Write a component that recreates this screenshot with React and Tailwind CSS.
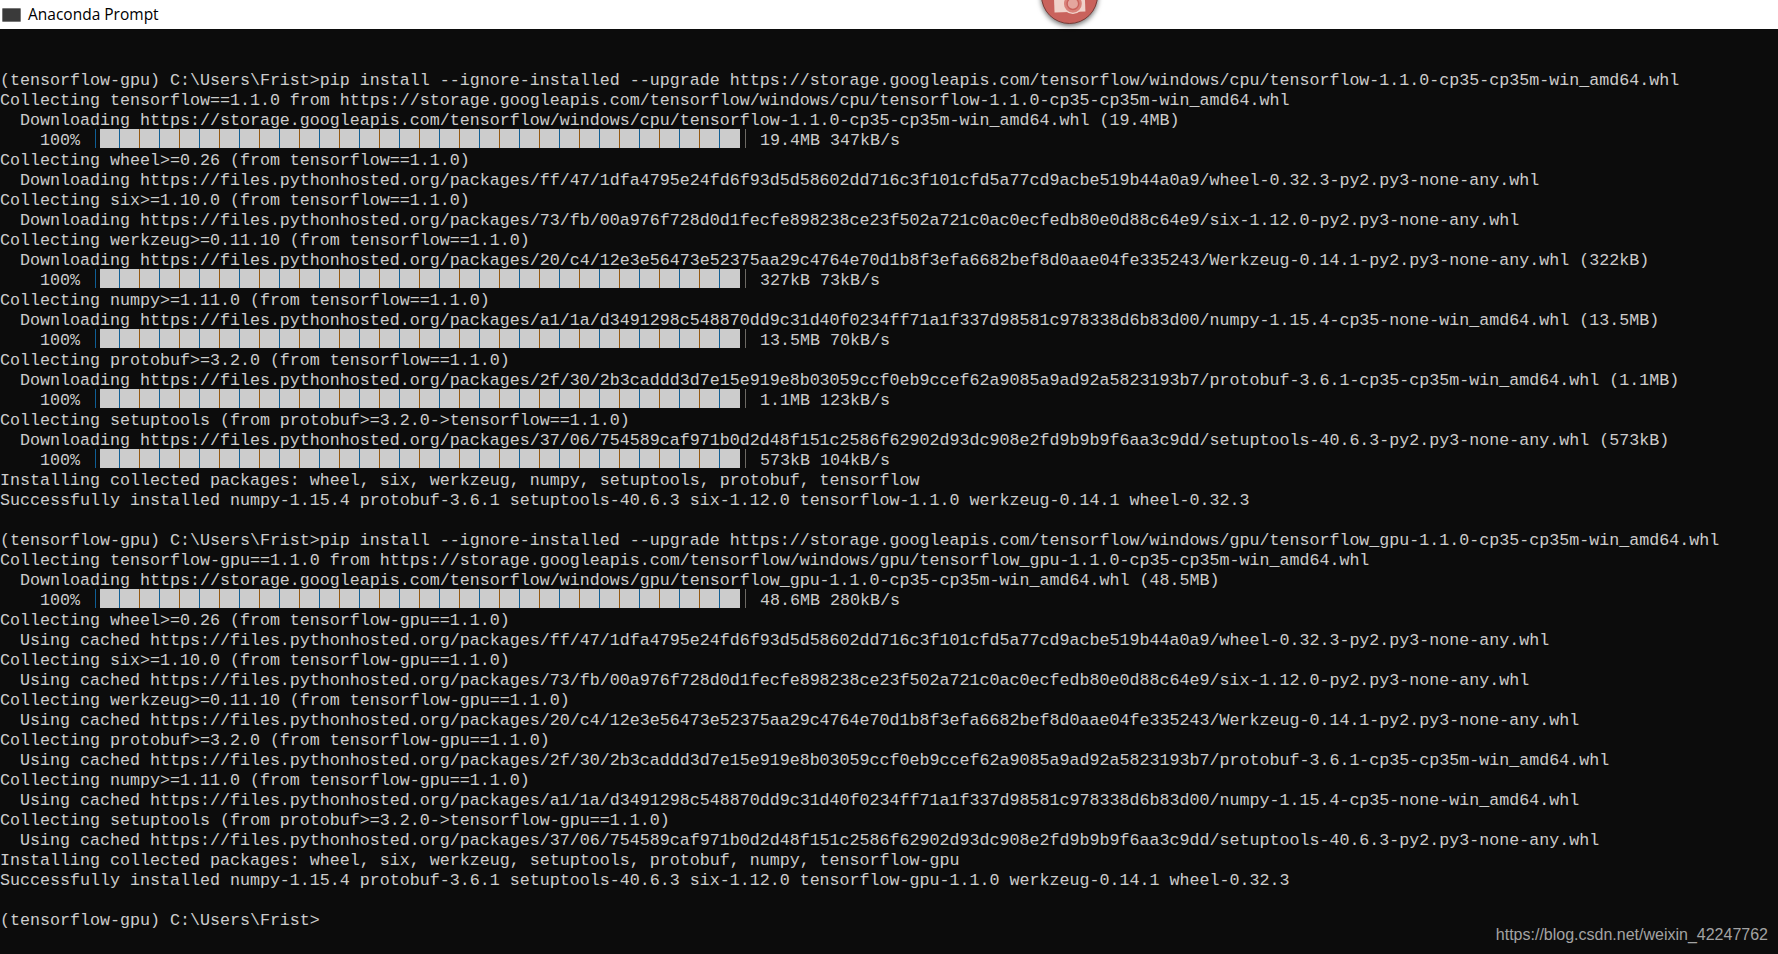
import React from 'react';

const cached = 'https://files.pythonhosted.org/packages';

const LINES = [
  '(tensorflow-gpu) C:\\Users\\Frist>pip install --ignore-installed --upgrade https://storage.googleapis.com/tensorflow/windows/cpu/tensorflow-1.1.0-cp35-cp35m-win_amd64.whl',
  'Collecting tensorflow==1.1.0 from https://storage.googleapis.com/tensorflow/windows/cpu/tensorflow-1.1.0-cp35-cp35m-win_amd64.whl',
  '  Downloading https://storage.googleapis.com/tensorflow/windows/cpu/tensorflow-1.1.0-cp35-cp35m-win_amd64.whl (19.4MB)',
  { bar: ' 19.4MB 347kB/s' },
  'Collecting wheel>=0.26 (from tensorflow==1.1.0)',
  `  Downloading ${cached}/ff/47/1dfa4795e24fd6f93d5d58602dd716c3f101cfd5a77cd9acbe519b44a0a9/wheel-0.32.3-py2.py3-none-any.whl`,
  'Collecting six>=1.10.0 (from tensorflow==1.1.0)',
  `  Downloading ${cached}/73/fb/00a976f728d0d1fecfe898238ce23f502a721c0ac0ecfedb80e0d88c64e9/six-1.12.0-py2.py3-none-any.whl`,
  'Collecting werkzeug>=0.11.10 (from tensorflow==1.1.0)',
  `  Downloading ${cached}/20/c4/12e3e56473e52375aa29c4764e70d1b8f3efa6682bef8d0aae04fe335243/Werkzeug-0.14.1-py2.py3-none-any.whl (322kB)`,
  { bar: ' 327kB 73kB/s' },
  'Collecting numpy>=1.11.0 (from tensorflow==1.1.0)',
  `  Downloading ${cached}/a1/1a/d3491298c548870dd9c31d40f0234ff71a1f337d98581c978338d6b83d00/numpy-1.15.4-cp35-none-win_amd64.whl (13.5MB)`,
  { bar: ' 13.5MB 70kB/s' },
  'Collecting protobuf>=3.2.0 (from tensorflow==1.1.0)',
  `  Downloading ${cached}/2f/30/2b3caddd3d7e15e919e8b03059ccf0eb9ccef62a9085a9ad92a5823193b7/protobuf-3.6.1-cp35-cp35m-win_amd64.whl (1.1MB)`,
  { bar: ' 1.1MB 123kB/s' },
  'Collecting setuptools (from protobuf>=3.2.0->tensorflow==1.1.0)',
  `  Downloading ${cached}/37/06/754589caf971b0d2d48f151c2586f62902d93dc908e2fd9b9b9f6aa3c9dd/setuptools-40.6.3-py2.py3-none-any.whl (573kB)`,
  { bar: ' 573kB 104kB/s' },
  'Installing collected packages: wheel, six, werkzeug, numpy, setuptools, protobuf, tensorflow',
  'Successfully installed numpy-1.15.4 protobuf-3.6.1 setuptools-40.6.3 six-1.12.0 tensorflow-1.1.0 werkzeug-0.14.1 wheel-0.32.3',
  '',
  '(tensorflow-gpu) C:\\Users\\Frist>pip install --ignore-installed --upgrade https://storage.googleapis.com/tensorflow/windows/gpu/tensorflow_gpu-1.1.0-cp35-cp35m-win_amd64.whl',
  'Collecting tensorflow-gpu==1.1.0 from https://storage.googleapis.com/tensorflow/windows/gpu/tensorflow_gpu-1.1.0-cp35-cp35m-win_amd64.whl',
  '  Downloading https://storage.googleapis.com/tensorflow/windows/gpu/tensorflow_gpu-1.1.0-cp35-cp35m-win_amd64.whl (48.5MB)',
  { bar: ' 48.6MB 280kB/s' },
  'Collecting wheel>=0.26 (from tensorflow-gpu==1.1.0)',
  `  Using cached ${cached}/ff/47/1dfa4795e24fd6f93d5d58602dd716c3f101cfd5a77cd9acbe519b44a0a9/wheel-0.32.3-py2.py3-none-any.whl`,
  'Collecting six>=1.10.0 (from tensorflow-gpu==1.1.0)',
  `  Using cached ${cached}/73/fb/00a976f728d0d1fecfe898238ce23f502a721c0ac0ecfedb80e0d88c64e9/six-1.12.0-py2.py3-none-any.whl`,
  'Collecting werkzeug>=0.11.10 (from tensorflow-gpu==1.1.0)',
  `  Using cached ${cached}/20/c4/12e3e56473e52375aa29c4764e70d1b8f3efa6682bef8d0aae04fe335243/Werkzeug-0.14.1-py2.py3-none-any.whl`,
  'Collecting protobuf>=3.2.0 (from tensorflow-gpu==1.1.0)',
  `  Using cached ${cached}/2f/30/2b3caddd3d7e15e919e8b03059ccf0eb9ccef62a9085a9ad92a5823193b7/protobuf-3.6.1-cp35-cp35m-win_amd64.whl`,
  'Collecting numpy>=1.11.0 (from tensorflow-gpu==1.1.0)',
  `  Using cached ${cached}/a1/1a/d3491298c548870dd9c31d40f0234ff71a1f337d98581c978338d6b83d00/numpy-1.15.4-cp35-none-win_amd64.whl`,
  'Collecting setuptools (from protobuf>=3.2.0->tensorflow-gpu==1.1.0)',
  `  Using cached ${cached}/37/06/754589caf971b0d2d48f151c2586f62902d93dc908e2fd9b9b9f6aa3c9dd/setuptools-40.6.3-py2.py3-none-any.whl`,
  'Installing collected packages: wheel, six, werkzeug, setuptools, protobuf, numpy, tensorflow-gpu',
  'Successfully installed numpy-1.15.4 protobuf-3.6.1 setuptools-40.6.3 six-1.12.0 tensorflow-gpu-1.1.0 werkzeug-0.14.1 wheel-0.32.3',
  '',
  '(tensorflow-gpu) C:\\Users\\Frist>',
];

const CELLS = Array.from({ length: 32 }, (_, i) => i);

function ProgressBar({ tail }) {
  return (
    <div className="flex h-5">
      <span className="w-[90px]">{'    100% '}</span>
      <span className="w-2.5 flex justify-center -mt-0.5">
        <span className="w-px h-[19px] bg-[#0f5f96]" />
      </span>
      <div className="flex -mt-0.5 h-[19px]">
        {CELLS.map((i) => (
          <span
            key={i}
            className={
              i === 31
                ? 'w-5 h-full bg-[#cccccc]'
                : i % 2 === 0
                  ? 'w-5 h-full bg-[#cccccc] border-r border-r-[#0f5f96]'
                  : 'w-5 h-full bg-[#cccccc] border-r border-r-[#96580f]'
            }
          />
        ))}
      </div>
      <span className="w-2.5 flex justify-center -mt-0.5">
        <span className="w-px h-[19px] bg-[#6d6a64]" />
      </span>
      <span>{tail}</span>
    </div>
  );
}

function CameraButton() {
  return (
    <div className="absolute left-[1041px] top-[-33px] w-[57px] h-[57px] rounded-full bg-[#c9625c] border border-[#7a3a36] shadow-[0_2px_5px_rgba(0,0,0,0.55)] overflow-hidden">
      <svg viewBox="0 0 57 57" className="w-full h-full">
        <path d="M12 20h32l1 25-32 1z" fill="#f0d2ca" />
        <circle cx="32" cy="37" r="10" fill="#d9827a" stroke="#f0d2ca" strokeWidth="1.5" />
        <circle cx="32" cy="37" r="6" fill="#e4a69e" stroke="#c9625c" strokeWidth="1.5" />
      </svg>
    </div>
  );
}

export default function App() {
  return (
    <div className="relative w-full h-[954px] overflow-hidden bg-[#0c0c0c]">
      {/* TITLE BAR */}
      <div className="h-[29px] bg-white flex items-center gap-[7px] pl-0.5">
        <span className="w-[19px] h-[14px] rounded-[1px] bg-[#3a3a3a] border border-[#777] blur-[0.4px]" />
        <span className="font-['Open_Sans',sans-serif] text-[15.5px] text-black">Anaconda Prompt</span>
      </div>
      <CameraButton />

      {/* CONSOLE */}
      <div className="pt-[42px] font-['Liberation_Mono',monospace] text-[16.667px] leading-5 text-[#cccccc] whitespace-pre">
        {LINES.map((line, i) =>
          typeof line === 'string' ? (
            <div key={i} className="h-5">{line}</div>
          ) : (
            <ProgressBar key={i} tail={line.bar} />
          )
        )}
      </div>

      {/* WATERMARK */}
      <div className="absolute right-[10px] top-[925px] font-['Liberation_Sans',sans-serif] text-[16px] leading-5 text-[#a3a3a3]">
        https://blog.csdn.net/weixin_42247762
      </div>
    </div>
  );
}
